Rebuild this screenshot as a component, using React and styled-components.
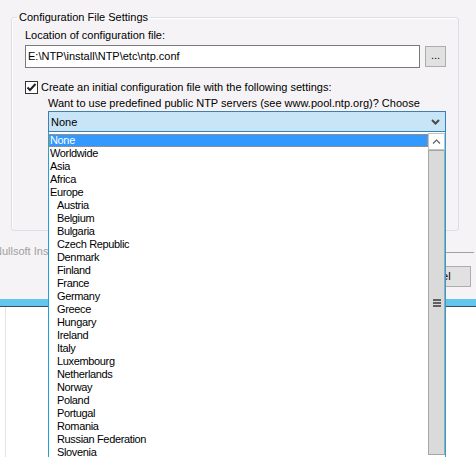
import React from "react";
import styled, { createGlobalStyle } from "styled-components";

const GlobalStyle = createGlobalStyle`
  html, body {
    margin: 0;
    padding: 0;
    background: #ffffff;
    overflow: hidden;
  }
  body {
    font-family: "Liberation Sans", Arial, sans-serif;
    font-size: 11px;
    color: #000;
  }
`;

const Page = styled.div`
  width: 476px;
  height: 457px;
  display: flex;
  flex-direction: column;
`;

const Window = styled.div`
  height: 299px;
  flex: none;
  background: #f5f3f5;
  display: flex;
  flex-direction: column;
  position: relative;
`;

const Frame = styled.div`
  height: 7px;
  flex: none;
  background: #62c6ee;
  border-bottom: 1px solid #3d4a52;
`;

const Behind = styled.div`
  flex: 1;
  margin-left: 5px;
  border-left: 1px solid #e3e3e3;
  background: #fff;
`;

const Group = styled.fieldset`
  box-sizing: border-box;
  margin: 11px 17px 0 11px;
  padding: 5px 12px 0 13px;
  height: 220px;
  border: 1px solid #dadfe4;
  border-radius: 3px;
  box-shadow: inset 1px 1px 0 #fff;
`;

const Legend = styled.legend`
  padding: 0 2px;
  margin-left: -8px;
  line-height: 13px;
`;

const Text = styled.div`
  line-height: 13px;
  white-space: nowrap;
  margin-top: ${(p) => p.$top || 0}px;
`;

const Row = styled.div`
  display: flex;
  align-items: center;
  gap: ${(p) => p.$gap || 0}px;
  margin-top: ${(p) => p.$top || 0}px;
`;

const Input = styled.div`
  box-sizing: border-box;
  width: 395px;
  height: 23px;
  background: #fff;
  border: 1px solid #7a7a7a;
  padding: 0 2px;
  line-height: 21px;
  white-space: nowrap;
`;

const SmallButton = styled.div`
  box-sizing: border-box;
  width: 21px;
  height: 21px;
  background: #e1e1e1;
  border: 1px solid #adadad;
  text-align: center;
  line-height: 17px;
  font-size: 11px;
`;

const Box = styled.div`
  box-sizing: border-box;
  width: 13px;
  height: 13px;
  border: 1px solid #333;
  background: #fff;
  display: flex;
  align-items: center;
  justify-content: center;
  flex: none;
`;

const Indent = styled.div`
  margin-left: 23px;
`;

const Combo = styled.div`
  position: relative;
  box-sizing: border-box;
  width: 398px;
  height: 21px;
  margin-top: 1px;
  background: #c7e5f7;
  border: 1px solid #3c7fb1;
  display: flex;
  align-items: center;
  justify-content: space-between;
  padding: 0 5px 0 2px;
`;

const DropList = styled.div`
  position: absolute;
  top: 20px;
  left: -1px;
  width: 398px;
  height: 330px;
  box-sizing: border-box;
  background: #fff;
  border: 1px solid #24a0da;
  border-top: 0;
  display: flex;
  z-index: 10;
`;

const Items = styled.div`
  flex: 1;
  padding-top: 2px;
`;

const Item = styled.div`
  height: 13px;
  line-height: 13px;
  box-sizing: border-box;
  padding-left: ${(p) => (p.$sub ? 8 : 1)}px;
  letter-spacing: -0.35px;
  white-space: nowrap;
  background: ${(p) => (p.$selected ? "#3399ff" : "transparent")};
  color: ${(p) => (p.$selected ? "#fff" : "#000")};
  outline: ${(p) => (p.$selected ? "1px dotted #e8862a" : "none")};
  outline-offset: -1px;
`;

const Scrollbar = styled.div`
  width: 17px;
  flex: none;
  display: flex;
  flex-direction: column;
  padding-top: 1px;
`;

const ArrowButton = styled.div`
  box-sizing: border-box;
  height: 17px;
  background: #fff;
  border: 1px solid #c2c2c2;
  display: flex;
  align-items: center;
  justify-content: center;
`;

const Thumb = styled.div`
  box-sizing: border-box;
  height: 305px;
  background: #dadada;
  border: 1px solid #a6a6a6;
  display: flex;
  align-items: center;
  justify-content: center;
`;

const Footer = styled.div`
  display: flex;
  align-items: center;
  margin-top: 14px;
  margin-right: 2px;
  line-height: 13px;
`;

const Brand = styled.span`
  color: #a0a0a0;
  margin-left: -6px;
  white-space: nowrap;
`;

const Line = styled.div`
  flex: 1;
  margin-left: 4px;
  border-top: 1px solid #a0a0a0;
  margin-top: 2px;
`;

const Buttons = styled.div`
  display: flex;
  justify-content: flex-end;
  gap: 8px;
  margin-top: 8px;
  padding-right: 5px;
`;

const Button = styled.div`
  box-sizing: border-box;
  width: 75px;
  height: 21px;
  background: #e1e1e1;
  border: 1px solid #adadad;
  text-align: center;
  line-height: 19px;
`;

const regions = [
  ["None", false],
  ["Worldwide", false],
  ["Asia", false],
  ["Africa", false],
  ["Europe", false],
  ["Austria", true],
  ["Belgium", true],
  ["Bulgaria", true],
  ["Czech Republic", true],
  ["Denmark", true],
  ["Finland", true],
  ["France", true],
  ["Germany", true],
  ["Greece", true],
  ["Hungary", true],
  ["Ireland", true],
  ["Italy", true],
  ["Luxembourg", true],
  ["Netherlands", true],
  ["Norway", true],
  ["Poland", true],
  ["Portugal", true],
  ["Romania", true],
  ["Russian Federation", true],
  ["Slovenia", true],
  ["Spain", true],
];

export default function App() {
  return (
    <Page>
      <GlobalStyle />
      <Window>
        <Group>
          <Legend>Configuration File Settings</Legend>
          <Text>Location of configuration file:</Text>
          <Row $gap={5} $top={3}>
            <Input>E:\NTP\install\NTP\etc\ntp.conf</Input>
            <SmallButton>...</SmallButton>
          </Row>
          <Row $gap={3} $top={13}>
            <Box>
              <svg width="11" height="11" viewBox="0 0 11 11">
                <path d="M1.5 5.5 L4 8 L9.5 2" fill="none" stroke="#222" strokeWidth="2" />
              </svg>
            </Box>
            <Text>Create an initial configuration file with the following settings:</Text>
          </Row>
          <Indent>
            <Text $top={3}>
              Want to use predefined public NTP servers (see www.pool.ntp.org)? Choose
            </Text>
            <Combo>
              <span>None</span>
              <svg width="9" height="6" viewBox="0 0 9 6">
                <path d="M1 1 L4.5 4.5 L8 1" fill="none" stroke="#4a4a4a" strokeWidth="2" />
              </svg>
              <DropList>
                <Items>
                  {regions.map(([name, sub], i) => (
                    <Item key={name} $sub={sub} $selected={i === 0}>
                      {name}
                    </Item>
                  ))}
                </Items>
                <Scrollbar>
                  <ArrowButton>
                    <svg width="9" height="5" viewBox="0 0 9 5">
                      <path d="M1 4.5 L4.5 1 L8 4.5" fill="none" stroke="#606060" strokeWidth="1.2" />
                    </svg>
                  </ArrowButton>
                  <Thumb>
                    <svg width="8" height="8" viewBox="0 0 8 8">
                      <rect x="0" y="0" width="8" height="2" fill="#606060" />
                      <rect x="0" y="3" width="8" height="2" fill="#606060" />
                      <rect x="0" y="6" width="8" height="2" fill="#606060" />
                    </svg>
                  </Thumb>
                </Scrollbar>
              </DropList>
            </Combo>
          </Indent>
        </Group>
        <Footer>
          <Brand>Nullsoft Install System v2.46</Brand>
          <Line />
        </Footer>
        <Buttons>
          <Button>&lt; Back</Button>
          <Button>Next &gt;</Button>
          <Button>Cancel</Button>
        </Buttons>
      </Window>
      <Frame />
      <Behind />
    </Page>
  );
}
